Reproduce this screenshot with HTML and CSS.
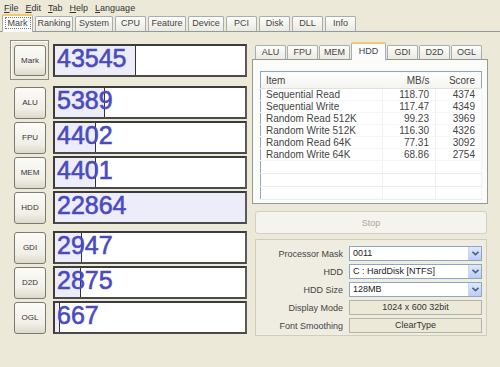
FILE: index.html
```html
<!DOCTYPE html>
<html lang="en">
  <head>
    <meta charset="UTF-8" />
    <title>CrystalMark</title>
    <link rel="stylesheet" href="styles.css">
  </head>
  <body>
    <div class="menu">
      <span><u>F</u>ile</span>
      <span><u>E</u>dit</span>
      <span><u>T</u>ab</span>
      <span><u>H</u>elp</span>
      <span><u>L</u>anguage</span>
    </div>

    <div class="tabs">
      <div class="tab active"><span class="focus">Mark</span></div>
      <div class="tab tab-lg">Ranking</div>
      <div class="tab tab-lg">System</div>
      <div class="tab">CPU</div>
      <div class="tab tab-lg">Feature</div>
      <div class="tab tab-md">Device</div>
      <div class="tab">PCI</div>
      <div class="tab">Disk</div>
      <div class="tab">DLL</div>
      <div class="tab">Info</div>
    </div>

    <div class="content">
      <!-- scores -->
      <div class="scores">
        <div class="mark-row">
          <div class="mark-frame"><button class="btn">Mark</button></div>
          <div class="bar">
            <div class="fill" style="width: 81px"></div>
            <span class="score">43545</span>
          </div>
        </div>

        <div class="group">
          <div class="row">
            <button class="btn">ALU</button>
            <div class="bar"><div class="fill" style="width: 50px"></div><span class="score">5389</span></div>
          </div>
          <div class="row">
            <button class="btn">FPU</button>
            <div class="bar"><div class="fill" style="width: 41px"></div><span class="score">4402</span></div>
          </div>
          <div class="row">
            <button class="btn">MEM</button>
            <div class="bar"><div class="fill" style="width: 41px"></div><span class="score">4401</span></div>
          </div>
          <div class="row">
            <button class="btn">HDD</button>
            <div class="bar"><div class="fill full" style="width: 190px"></div><span class="score">22864</span></div>
          </div>
        </div>

        <div class="group">
          <div class="row">
            <button class="btn">GDI</button>
            <div class="bar"><div class="fill" style="width: 27px"></div><span class="score">2947</span></div>
          </div>
          <div class="row">
            <button class="btn">D2D</button>
            <div class="bar"><div class="fill" style="width: 26px"></div><span class="score">2875</span></div>
          </div>
          <div class="row">
            <button class="btn">OGL</button>
            <div class="bar"><div class="fill" style="width: 5px"></div><span class="score">667</span></div>
          </div>
        </div>
      </div>

      <!-- detail -->
      <div class="detail">
        <div class="subtabs">
          <div class="subtab">ALU</div>
          <div class="subtab">FPU</div>
          <div class="subtab">MEM</div>
          <div class="subtab active">HDD</div>
          <div class="subtab">GDI</div>
          <div class="subtab">D2D</div>
          <div class="subtab">OGL</div>
        </div>
        <div class="panel">
          <table class="list">
            <thead>
              <tr><th class="c-item">Item</th><th class="c-num">MB/s</th><th class="c-score">Score</th></tr>
            </thead>
            <tbody>
              <tr><td>Sequential Read</td><td class="num">118.70</td><td class="num">4374</td></tr>
              <tr><td>Sequential Write</td><td class="num">117.47</td><td class="num">4349</td></tr>
              <tr><td>Random Read 512K</td><td class="num">99.23</td><td class="num">3969</td></tr>
              <tr><td>Random Write 512K</td><td class="num">116.30</td><td class="num">4326</td></tr>
              <tr><td>Random Read 64K</td><td class="num">77.31</td><td class="num">3092</td></tr>
              <tr><td>Random Write 64K</td><td class="num">68.86</td><td class="num">2754</td></tr>
              <tr class="empty"><td></td><td></td><td></td></tr>
              <tr class="empty"><td></td><td></td><td></td></tr>
              <tr class="empty"><td></td><td></td><td></td></tr>
            </tbody>
          </table>
        </div>

        <button class="stop" disabled>Stop</button>

        <div class="settings">
          <div class="field">
            <label>Processor Mask</label>
            <div class="combo">0011<span class="drop"><svg width="7" height="5" viewBox="0 0 7 5"><path d="M0.5 0.8 L3.5 3.6 L6.5 0.8" fill="none" stroke="#4d6185" stroke-width="1.6"/></svg></span></div>
          </div>
          <div class="field">
            <label>HDD</label>
            <div class="combo">C : HardDisk [NTFS]<span class="drop"><svg width="7" height="5" viewBox="0 0 7 5"><path d="M0.5 0.8 L3.5 3.6 L6.5 0.8" fill="none" stroke="#4d6185" stroke-width="1.6"/></svg></span></div>
          </div>
          <div class="field">
            <label>HDD Size</label>
            <div class="combo">128MB<span class="drop"><svg width="7" height="5" viewBox="0 0 7 5"><path d="M0.5 0.8 L3.5 3.6 L6.5 0.8" fill="none" stroke="#4d6185" stroke-width="1.6"/></svg></span></div>
          </div>
          <div class="field">
            <label>Display Mode</label>
            <div class="static">1024 x 600 32bit</div>
          </div>
          <div class="field">
            <label>Font Smoothing</label>
            <div class="static">ClearType</div>
          </div>
        </div>
      </div>
    </div>
  </body>
</html>
```

FILE: styles.css
```css
* {
  margin: 0;
  padding: 0;
  box-sizing: border-box;
}

body {
  width: 500px;
  height: 367px;
  overflow: hidden;
  background-color: #ece9d8;
  font-family: "Liberation Sans", Arial, sans-serif;
  font-size: 9px;
  color: #333;
}

/* menu */
.menu {
  height: 15px;
  display: flex;
  align-items: center;
  gap: 7px;
  padding-left: 4px;
  color: #333;
}

/* top tabs */
.tabs {
  height: 17px;
  display: flex;
  align-items: flex-end;
  gap: 2px;
  padding-left: 2px;
  border-bottom: 1px solid #919b9c;
}

.tab {
  width: 31px;
  height: 15px;
  line-height: 13px;
  text-align: center;
  border: 1px solid #a8aeaf;
  border-bottom: none;
  border-radius: 2px 2px 0 0;
  background: linear-gradient(#fcfcfa, #ebe9df);
  color: #444;
}

.tab-lg {
  width: 38px;
}

.tab-md {
  width: 36px;
}

.tabs .active {
  height: 18px;
  margin-bottom: -1px;
  line-height: 15px;
  background: #fcfcfe;
  border-top: 2px solid #f2c86a;
}

.focus {
  padding: 0 2px;
  outline: 1px dotted #777;
}

/* layout */
.content {
  display: flex;
  gap: 5px;
  padding: 8px 0 0 10px;
}

.scores {
  width: 237px;
}

.mark-row {
  display: flex;
  align-items: center;
  gap: 4px;
  margin-bottom: 6px;
}

.mark-frame {
  width: 39px;
  height: 40px;
  padding: 4px 0 0 3px;
  border: 1px solid #8e8c80;
  box-shadow: inset 1px 1px #fff;
}

.mark-frame .btn {
  height: 31px;
}

.group {
  display: flex;
  flex-direction: column;
  gap: 2px;
  margin-bottom: 7px;
}

.row {
  display: flex;
  align-items: center;
  gap: 7px;
  padding-left: 4px;
}

.btn {
  width: 32px;
  height: 32px;
  border: 1px solid #7b7a72;
  border-radius: 3px;
  background: linear-gradient(#fbfbf8, #f1efe6 70%, #dcd9cc);
  font-family: "Liberation Sans", Arial, sans-serif;
  font-size: 8px;
  color: #333;
}

.bar {
  position: relative;
  width: 194px;
  height: 33px;
  background-color: #fff;
  border: 2px solid #3c3c3c;
  border-right-color: #5a5a5a;
  border-bottom-color: #4a4a4a;
}

.fill {
  position: absolute;
  top: 0;
  left: 0;
  bottom: 0;
  background-color: #ededfa;
  border-right: 1px solid #333;
}

.fill.full {
  border-right: none;
}

.score {
  position: relative;
  display: block;
  padding-left: 2px;
  font-size: 25px;
  line-height: 25px;
  color: #4a4ac0;
  -webkit-text-stroke: 0.6px #4a4ac0;
}

/* right side */
.detail {
  width: 236px;
}

.subtabs {
  height: 17px;
  display: flex;
  align-items: flex-end;
  gap: 1px;
  padding-left: 3px;
  margin-top: 2px;
}

.subtab {
  width: 31px;
  height: 14px;
  line-height: 13px;
  text-align: center;
  border: 1px solid #a8aeaf;
  border-bottom: none;
  border-radius: 2px 2px 0 0;
  background: linear-gradient(#fcfcfa, #ebe9df);
  color: #444;
}

.subtab.active {
  width: 35px;
  height: 18px;
  margin-bottom: -1px;
  line-height: 15px;
  background: #fcfcfe;
  border-top: 2px solid #f2c86a;
  position: relative;
}

.panel {
  height: 145px;
  padding: 11px 5px 0 7px;
  background-color: #fbfbf8;
  border: 1px solid #919b9c;
}

.list {
  width: 222px;
  border-collapse: collapse;
  border: 1px solid #8fa7bd;
  background-color: #fff;
  font-size: 10px;
  color: #444;
}

.list th {
  height: 17px;
  font-weight: normal;
  border-bottom: 1px solid #e2e2da;
  background: linear-gradient(#fff, #f4f3ee);
}

.list td {
  height: 12px;
  line-height: 11px;
  border-right: 1px solid #f0f0f0;
  border-bottom: 1px solid #f6f6f6;
}

.list .c-item {
  width: 122px;
  text-align: left;
  padding-left: 5px;
}

.list td:first-child {
  padding-left: 5px;
}

.list .c-num {
  width: 53px;
  text-align: right;
  padding-right: 6px;
}

.list .c-score {
  text-align: right;
  padding-right: 6px;
}

.list .num {
  text-align: right;
  padding-right: 6px;
}

.list .empty td {
  height: 13px;
  border-bottom: 1px solid #ececec;
}

.stop {
  display: block;
  width: 232px;
  height: 23px;
  margin: 7px 0 0 3px;
  border: 1px solid #d2d0c4;
  border-radius: 3px;
  background-color: #f4f3ee;
  font-family: "Liberation Sans", Arial, sans-serif;
  font-size: 9px;
  color: #aca899;
}

.settings {
  width: 232px;
  height: 97px;
  margin: 5px 0 0 3px;
  padding: 6px 4px 0 0;
  display: flex;
  flex-direction: column;
  gap: 3px;
  border: 1px solid #d0cdbd;
  background-color: #efede2;
}

.field {
  display: flex;
  align-items: center;
  gap: 6px;
  height: 15px;
}

.field label {
  width: 87px;
  text-align: right;
  color: #444;
}

.combo {
  position: relative;
  flex: 1;
  height: 15px;
  line-height: 13px;
  padding-left: 3px;
  background-color: #fff;
  border: 1px solid #8fa7bd;
  color: #222;
}

.drop {
  position: absolute;
  top: 0;
  right: 0;
  width: 13px;
  height: 13px;
  display: flex;
  align-items: center;
  justify-content: center;
  background: linear-gradient(#dfe8fd, #b9cdf8);
  border-left: 1px solid #c8d6f5;
}

.static {
  flex: 1;
  height: 15px;
  line-height: 13px;
  text-align: center;
  background-color: #ece9d8;
  border: 1px solid #b6b3a3;
  color: #333;
}
```
